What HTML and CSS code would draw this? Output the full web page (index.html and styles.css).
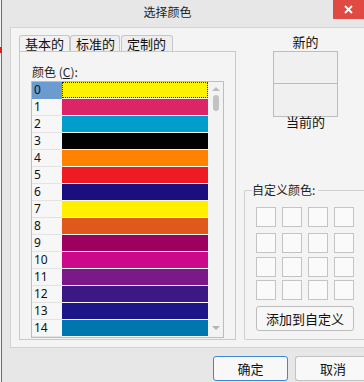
FILE: index.html
```html
<!DOCTYPE html>
<html lang="zh-CN">
<head>
    <meta charset="UTF-8">
    <title>选择颜色</title>
    <link rel="stylesheet" href="styles.css">
</head>
<body>
    <span class="edge-mark"></span>
    <div class="window">
        <div class="titlebar">
            <div class="title">选择颜色</div>
            <div class="close">
                <svg width="9" height="9" viewBox="0 0 9 9">
                    <path d="M1 1L8 8M8 1L1 8" stroke="#fff" stroke-width="1.8" fill="none"/>
                </svg>
            </div>
        </div>

        <div class="panel">
            <div class="left">
                <div class="tabs">
                    <div class="tab t1">基本的</div>
                    <div class="tab t2">标准的</div>
                    <div class="tab t3">定制的</div>
                </div>
                <div class="pane">
                    <div class="label">颜色 (<u>C</u>):</div>
                    <div class="listbox">
                        <div class="rows">
                            <div class="row selected"><span class="num">0</span><span class="swatch" style="background:#fff200"></span></div>
                            <div class="row"><span class="num">1</span><span class="swatch" style="background:#dd2467"></span></div>
                            <div class="row"><span class="num">2</span><span class="swatch" style="background:#009fcb"></span></div>
                            <div class="row"><span class="num">3</span><span class="swatch" style="background:#000000"></span></div>
                            <div class="row"><span class="num">4</span><span class="swatch" style="background:#ff8300"></span></div>
                            <div class="row"><span class="num">5</span><span class="swatch" style="background:#ee1b24"></span></div>
                            <div class="row"><span class="num">6</span><span class="swatch" style="background:#1b0e7e"></span></div>
                            <div class="row"><span class="num">7</span><span class="swatch" style="background:#fff000"></span></div>
                            <div class="row"><span class="num">8</span><span class="swatch" style="background:#e1581c"></span></div>
                            <div class="row"><span class="num">9</span><span class="swatch" style="background:#9e005f"></span></div>
                            <div class="row"><span class="num">10</span><span class="swatch" style="background:#cb0a8b"></span></div>
                            <div class="row"><span class="num">11</span><span class="swatch" style="background:#7b1989"></span></div>
                            <div class="row"><span class="num">12</span><span class="swatch" style="background:#3b1884"></span></div>
                            <div class="row"><span class="num">13</span><span class="swatch" style="background:#1d1688"></span></div>
                            <div class="row"><span class="num">14</span><span class="swatch" style="background:#0076af"></span></div>
                        </div>
                        <div class="scrollbar">
                            <span class="arrow up"></span>
                            <span class="thumb"></span>
                            <span class="spacer"></span>
                            <span class="arrow down"></span>
                        </div>
                    </div>
                </div>
            </div>

            <div class="right">
                <div class="caption">新的</div>
                <div class="preview">
                    <div class="half"></div>
                    <div class="half"></div>
                </div>
                <div class="caption current">当前的</div>

                <fieldset class="custom">
                    <legend>自定义颜色:</legend>
                    <div class="custom-grid">
                        <span class="cell"></span><span class="cell"></span><span class="cell"></span><span class="cell"></span>
                        <span class="cell"></span><span class="cell"></span><span class="cell"></span><span class="cell"></span>
                        <span class="cell"></span><span class="cell"></span><span class="cell"></span><span class="cell"></span>
                        <span class="cell"></span><span class="cell"></span><span class="cell"></span><span class="cell"></span>
                    </div>
                    <button class="add">添加到自定义</button>
                </fieldset>
            </div>
        </div>

        <div class="footer">
            <button class="btn primary">确定</button>
            <button class="btn cut">取消</button>
        </div>
    </div>
</body>
</html>
```

FILE: styles.css
```css
* {
    margin: 0;
    padding: 0;
    box-sizing: border-box;
}

body {
    width: 364px;
    height: 382px;
    overflow: hidden;
    background-color: #f2f2f2;
    font-family: "Noto Sans CJK SC", "Noto Sans", sans-serif;
    font-size: 12px;
    color: #1e1e1e;
    position: relative;
}

.edge-mark {
    position: absolute;
    left: 0;
    top: 47px;
    width: 2px;
    height: 6px;
    background-color: #e0201c;
}

.window {
    margin-left: 1px;
    width: 363px;
    height: 382px;
    border-left: 1px solid #2f7fd6;
    background-color: #e7e7e7;
    overflow: hidden;
}

/* barre de titre */
.titlebar {
    display: flex;
    height: 27px;
}

.title {
    flex: 1;
    text-align: center;
    padding-top: 4px;
    line-height: 16px;
    font-size: 12px;
    color: #222;
}

.close {
    width: 31px;
    height: 19px;
    background-color: #e04a43;
    display: flex;
    align-items: center;
    justify-content: center;
}

/* panneau principal */
.panel {
    display: flex;
    margin-left: 8px;
    width: 354px;
    height: 321px;
    border: 1px solid #d3d3d3;
    border-right: none;
    background-color: #f4f4f4;
}

.left {
    width: 225px;
    padding-left: 8px;
    padding-top: 7px;
}

.tabs {
    display: flex;
    height: 16px;
}

.tab {
    height: 16px;
    border: 1px solid #c6c6c6;
    border-bottom: none;
    border-radius: 3px 3px 0 0;
    background-color: #eeeeee;
    font-size: 13px;
    line-height: 15px;
    padding-left: 5px;
    color: #111;
    white-space: nowrap;
}

.tab.t1 {
    width: 51px;
    background-color: #f2f2f2;
}

.tab.t2 {
    width: 50px;
}

.tab.t3 {
    width: 52px;
    margin-left: 1px;
}

.pane {
    width: 217px;
    height: 289px;
    border: 1px solid #c9c9c9;
    padding-left: 11px;
    background-color: #f4f4f4;
}

.label {
    padding-top: 12px;
    margin-left: 1px;
    margin-bottom: 1px;
    line-height: 16px;
    font-size: 12px;
}

.label u {
    text-decoration: underline;
}

.listbox {
    display: flex;
    width: 193px;
    height: 257px;
    border: 1px solid #bdbdbd;
    background-color: #f7f7f7;
}

.rows {
    width: 176px;
}

.row {
    display: flex;
    height: 17px;
}

.num {
    width: 30px;
    height: 17px;
    border-bottom: 1px solid #e3e3e3;
    padding-left: 2px;
    font-family: "Noto Sans", "Liberation Sans", sans-serif;
    font-size: 12px;
    line-height: 16px;
    color: #111;
}

.swatch {
    width: 146px;
    height: 16px;
}

.row.selected .num {
    background-color: #6b9bcf;
    border-bottom-color: #6b9bcf;
}

.row.selected .swatch {
    outline: 1px dotted #1b2a8a;
    outline-offset: -1px;
}

.scrollbar {
    width: 15px;
    display: flex;
    flex-direction: column;
    align-items: center;
    padding-top: 5px;
    padding-bottom: 7px;
    background-color: #f3f3f3;
}

.arrow {
    width: 0;
    height: 0;
    border-left: 4px solid transparent;
    border-right: 4px solid transparent;
}

.arrow.up {
    border-bottom: 4px solid #bdbdbd;
}

.arrow.down {
    border-top: 4px solid #b3b3b3;
}

.thumb {
    margin-top: 4px;
    width: 6px;
    height: 16px;
    border-radius: 3px;
    background-color: #c2c2c2;
}

.spacer {
    flex: 1;
}

/* colonne de droite */
.right {
    width: 128px;
    padding-left: 11px;
}

.caption {
    margin-top: 6px;
    text-align: center;
    line-height: 16px;
    font-size: 13px;
    color: #111;
}

.caption.current {
    margin-top: -2px;
    line-height: 14px;
}

.preview {
    margin: 1px auto 0;
    width: 65px;
    height: 66px;
    border: 1px solid #bcbcbc;
    background-color: #f0f0f0;
}

.preview .half {
    height: 32px;
}

.preview .half:first-child {
    border-bottom: 1px solid #bcbcbc;
}

.custom {
    margin-top: 53px;
    margin-left: -3px;
    width: 120px;
    border: 1px solid #d0d0d0;
    border-right: none;
    border-radius: 2px 0 0 2px;
    padding: 0 0 8px 11px;
}

.custom legend {
    margin-left: -4px;
    padding: 0 3px 0 0;
    line-height: 16px;
    font-size: 12px;
    color: #1e1e1e;
}

.custom-grid {
    display: grid;
    grid-template-columns: repeat(4, 20px);
    grid-template-rows: 26px 24px 23px 20px;
    column-gap: 6px;
    margin-top: 9px;
}

.cell {
    width: 20px;
    height: 20px;
    border: 1px solid #c4c4c4;
    background-color: #fafafa;
}

.add {
    margin-top: 6px;
    width: 98px;
    height: 25px;
    border: 1px solid #bcbcbc;
    border-radius: 3px;
    background-color: #f7f7f7;
    font-family: "Noto Sans CJK SC", sans-serif;
    font-size: 13px;
    line-height: 23px;
    color: #111;
}

/* boutons du bas */
.footer {
    display: flex;
    gap: 7px;
    padding-top: 8px;
    padding-left: 211px;
}

.btn {
    flex: none;
    width: 75px;
    height: 25px;
    border: 1px solid #c2c2c2;
    border-radius: 3px;
    background-color: #f8f8f8;
    font-family: "Noto Sans CJK SC", sans-serif;
    font-size: 13px;
    line-height: 23px;
    color: #111;
}

.btn.primary {
    border-color: #3f86d6;
}

/* le bouton Annuler dépasse du cadre : on le coupe au bord */
.btn.cut {
    width: 69px;
    padding-left: 6px;
    border-right: none;
    border-radius: 3px 0 0 3px;
}
```
